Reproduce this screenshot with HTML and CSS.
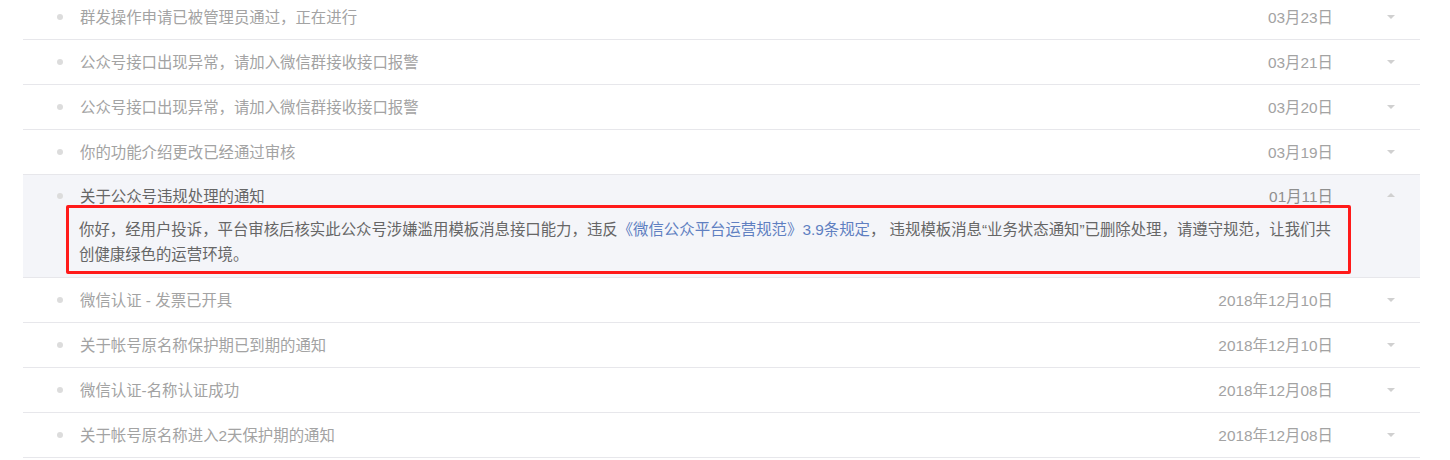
FILE: index.html
```html
<!DOCTYPE html>
<html lang="zh-CN">
<head>
<meta charset="utf-8">
<title>通知</title>
<link rel="stylesheet" href="styles.css">
</head>
<body>
<ul class="list">
  <li class="item"><div class="row"><span class="dot"></span><span class="title">群发操作申请已被管理员通过，正在进行</span><span class="date">03月23日</span><span class="arrow"></span></div></li>
  <li class="item"><div class="row"><span class="dot"></span><span class="title">公众号接口出现异常，请加入微信群接收接口报警</span><span class="date">03月21日</span><span class="arrow"></span></div></li>
  <li class="item"><div class="row"><span class="dot"></span><span class="title">公众号接口出现异常，请加入微信群接收接口报警</span><span class="date">03月20日</span><span class="arrow"></span></div></li>
  <li class="item"><div class="row"><span class="dot"></span><span class="title">你的功能介绍更改已经通过审核</span><span class="date">03月19日</span><span class="arrow"></span></div></li>
  <li class="item open">
    <div class="row"><span class="dot"></span><span class="title">关于公众号违规处理的通知</span><span class="date">01月11日</span><span class="arrow up"></span></div>
    <div class="detail">你好，经用户投诉，平台审核后核实此公众号涉嫌滥用模板消息接口能力，违反<a class="link" href="#">《微信公众平台运营规范》3.9条规定</a>， 违规模板消息“业务状态通知”已删除处理，请遵守规范，让我们共创健康绿色的运营环境。</div>
    <div class="mark"></div>
  </li>
  <li class="item"><div class="row"><span class="dot"></span><span class="title">微信认证 - 发票已开具</span><span class="date">2018年12月10日</span><span class="arrow"></span></div></li>
  <li class="item"><div class="row"><span class="dot"></span><span class="title">关于帐号原名称保护期已到期的通知</span><span class="date">2018年12月10日</span><span class="arrow"></span></div></li>
  <li class="item"><div class="row"><span class="dot"></span><span class="title">微信认证-名称认证成功</span><span class="date">2018年12月08日</span><span class="arrow"></span></div></li>
  <li class="item"><div class="row"><span class="dot"></span><span class="title">关于帐号原名称进入2天保护期的通知</span><span class="date">2018年12月08日</span><span class="arrow"></span></div></li>
</ul>
</body>
</html>
```

FILE: styles.css
```css
html, body {
  margin: 0;
  padding: 0;
  background: #ffffff;
}
body {
  font-family: "Liberation Sans", "Noto Sans CJK SC", sans-serif;
  font-size: 15.4px;
  color: #a0a0a0;
  overflow: hidden;
}
.list {
  list-style: none;
  margin: -5px 30px 0 23px;
  padding: 0;
}
.item {
  position: relative;
  border-bottom: 1px solid #e7e7eb;
}
.row {
  display: flex;
  align-items: center;
  height: 44px;
  box-sizing: border-box;
  padding-bottom: 3px;
}
.dot {
  width: 6px;
  height: 6px;
  border-radius: 50%;
  background: #dcdcdc;
  margin-left: 34px;
  margin-right: 17px;
  margin-top: 2px;
  flex: none;
}
.title {
  flex: 1;
  color: #a3a3a3;
  white-space: nowrap;
}
.date {
  color: #a3a3a3;
  margin-right: 54px;
  white-space: nowrap;
}
.arrow {
  width: 0;
  height: 0;
  border-left: 4px solid transparent;
  border-right: 4px solid transparent;
  border-top: 4px solid #d0d0d0;
  margin-right: 25px;
  margin-top: 2px;
  flex: none;
}
.arrow.up {
  border-top: 0;
  border-bottom: 4px solid #d0d0d0;
  margin-top: 0;
}
.open {
  background: #f4f5f9;
  border-top: 1px solid #e7e7eb;
  margin-top: -1px;
}
.open .row {
  height: 42px;
}
.open .title {
  color: #666;
}
.open .date {
  color: #8f8f8f;
}
.detail {
  padding: 0 78px 10px 56px;
  line-height: 25px;
  color: #666;
}
.link {
  color: #5f7fc1;
  text-decoration: none;
}
.mark {
  position: absolute;
  left: 43px;
  top: 30px;
  width: 1285px;
  height: 69px;
  box-sizing: border-box;
  border: 3px solid #ff1a1a;
  border-radius: 2px;
  pointer-events: none;
}
```
